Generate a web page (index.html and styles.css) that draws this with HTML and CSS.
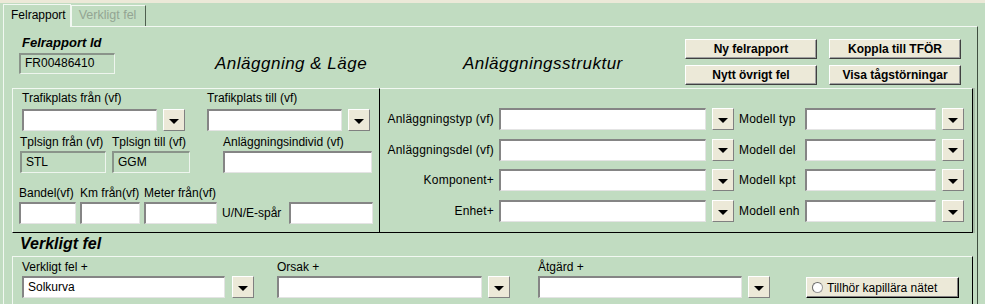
FILE: index.html
```html
<!DOCTYPE html>
<html lang="sv">
<head>
  <meta charset="UTF-8" />
  <title>Felrapport</title>
  <link rel="stylesheet" href="styles.css">
</head>
<body>
  <div class="tabs">
    <div class="tab active">Felrapport</div>
    <div class="tab">Verkligt fel</div>
  </div>

  <div class="page">
    <!-- header: id, titles, actions -->
    <div class="head">
      <div class="id-block">
        <div class="id-label">Felrapport Id</div>
        <div class="field disabled id-field">FR00486410</div>
      </div>
      <div class="title title-loc">Anläggning &amp; Läge</div>
      <div class="title title-struct">Anläggningsstruktur</div>
      <div class="actions">
        <button class="btn">Ny felrapport</button>
        <button class="btn">Koppla till TFÖR</button>
        <button class="btn">Nytt övrigt fel</button>
        <button class="btn">Visa tågstörningar</button>
      </div>
    </div>

    <div class="groups">
      <!-- Anläggning & Läge -->
      <div class="group group-loc">
        <div class="row loc-row1">
          <div class="col col-tp1">
            <div class="lbl">Trafikplats från (vf)</div>
            <div class="combo"><div class="field w135"></div><span class="drop"><svg viewBox="0 0 10 5" width="10" height="5"><polygon points="0,0 10,0 5,5"/></svg></span></div>
          </div>
          <div class="col col-tp2">
            <div class="lbl">Trafikplats till (vf)</div>
            <div class="combo"><div class="field w135"></div><span class="drop"><svg viewBox="0 0 10 5" width="10" height="5"><polygon points="0,0 10,0 5,5"/></svg></span></div>
          </div>
        </div>
        <div class="row loc-row2">
          <div class="col col-sign1">
            <div class="lbl">Tplsign från (vf)</div>
            <div class="field disabled w86">STL</div>
          </div>
          <div class="col col-sign2">
            <div class="lbl">Tplsign till (vf)</div>
            <div class="field disabled w78">GGM</div>
          </div>
          <div class="col col-ind">
            <div class="lbl">Anläggningsindivid (vf)</div>
            <div class="field w149"></div>
          </div>
        </div>
        <div class="row loc-row3">
          <div class="col col-bandel">
            <div class="lbl">Bandel(vf)</div>
            <div class="field w57"></div>
          </div>
          <div class="col col-km">
            <div class="lbl">Km från(vf)</div>
            <div class="field w60"></div>
          </div>
          <div class="col col-m">
            <div class="lbl">Meter från(vf)</div>
            <div class="field w73"></div>
          </div>
          <div class="inline-lbl spar-lbl">U/N/E-spår</div>
          <div class="field w84"></div>
        </div>
      </div>

      <!-- Anläggningsstruktur -->
      <div class="group group-struct">
        <div class="srow">
          <div class="slbl">Anläggningstyp (vf)</div>
          <div class="field w207"></div>
          <span class="drop"><svg viewBox="0 0 10 5" width="10" height="5"><polygon points="0,0 10,0 5,5"/></svg></span>
          <div class="mlbl">Modell typ</div>
          <div class="field w131"></div>
          <span class="drop"><svg viewBox="0 0 10 5" width="10" height="5"><polygon points="0,0 10,0 5,5"/></svg></span>
        </div>
        <div class="srow">
          <div class="slbl">Anläggningsdel (vf)</div>
          <div class="field w207"></div>
          <span class="drop"><svg viewBox="0 0 10 5" width="10" height="5"><polygon points="0,0 10,0 5,5"/></svg></span>
          <div class="mlbl">Modell del</div>
          <div class="field w131"></div>
          <span class="drop"><svg viewBox="0 0 10 5" width="10" height="5"><polygon points="0,0 10,0 5,5"/></svg></span>
        </div>
        <div class="srow">
          <div class="slbl">Komponent+</div>
          <div class="field w207"></div>
          <span class="drop"><svg viewBox="0 0 10 5" width="10" height="5"><polygon points="0,0 10,0 5,5"/></svg></span>
          <div class="mlbl">Modell kpt</div>
          <div class="field w131"></div>
          <span class="drop"><svg viewBox="0 0 10 5" width="10" height="5"><polygon points="0,0 10,0 5,5"/></svg></span>
        </div>
        <div class="srow">
          <div class="slbl">Enhet+</div>
          <div class="field w207"></div>
          <span class="drop"><svg viewBox="0 0 10 5" width="10" height="5"><polygon points="0,0 10,0 5,5"/></svg></span>
          <div class="mlbl">Modell enh</div>
          <div class="field w131"></div>
          <span class="drop"><svg viewBox="0 0 10 5" width="10" height="5"><polygon points="0,0 10,0 5,5"/></svg></span>
        </div>
      </div>
    </div>

    <div class="sub-title">Verkligt fel</div>

    <!-- Verkligt fel -->
    <div class="group group-fault">
      <div class="row fault-row">
        <div class="col col-vf">
          <div class="lbl">Verkligt fel +</div>
          <div class="combo"><div class="field w203">Solkurva</div><span class="drop"><svg viewBox="0 0 10 5" width="10" height="5"><polygon points="0,0 10,0 5,5"/></svg></span></div>
        </div>
        <div class="col col-orsak">
          <div class="lbl">Orsak +</div>
          <div class="combo"><div class="field w205"></div><span class="drop"><svg viewBox="0 0 10 5" width="10" height="5"><polygon points="0,0 10,0 5,5"/></svg></span></div>
        </div>
        <div class="col col-atgard">
          <div class="lbl">Åtgärd +</div>
          <div class="combo"><div class="field w204"></div><span class="drop"><svg viewBox="0 0 10 5" width="10" height="5"><polygon points="0,0 10,0 5,5"/></svg></span></div>
        </div>
        <div class="radio-btn"><span class="radio"></span>Tillhör kapillära nätet</div>
      </div>
    </div>
  </div>
</body>
</html>
```

FILE: styles.css
```css
* {
  box-sizing: border-box;
}

html, body {
  margin: 0;
}

body {
  width: 985px;
  height: 304px;
  overflow: hidden;
  background: #c1dcc1;
  border-top: 3px solid #ece9d8;
  font-family: 'Liberation Sans', Arial, sans-serif;
  font-size: 12px;
  color: #000;
}

/* tabs */
.tabs {
  display: flex;
  align-items: flex-end;
  height: 23px;
  padding-left: 3px;
}

.tab {
  height: 21px;
  line-height: 19px;
  padding: 0 9px 0 7px;
  border: 1px solid #f2f8f2;
  border-bottom: none;
  border-right-color: #4f5f4f;
  color: #93a593;
  font-size: 12.5px;
}

.tab.active {
  height: 23px;
  line-height: 20px;
  padding: 0 4px 0 7px;
  margin-bottom: -1px;
  border-right-color: #f2f8f2;
  background: #c1dcc1;
  color: #000;
  font-size: 12px;
  position: relative;
  z-index: 1;
}

/* page */
.page {
  margin-left: 3px;
  width: 975px;
  height: 280px;
  border-top: 1px solid #f2f8f2;
  border-left: 1px solid #f2f8f2;
  border-right: 1px solid #3f4f3f;
}

.head {
  display: flex;
  height: 61px;
}

.id-block {
  margin: 8px 0 0 15px;
  width: 96px;
}

.id-label {
  height: 18px;
  padding-left: 3px;
  font-size: 13px;
  line-height: 15px;
  font-weight: bold;
  font-style: italic;
}

.title {
  margin-top: 27px;
  font-size: 17px;
  line-height: 20px;
  font-style: italic;
  letter-spacing: 0.5px;
  white-space: nowrap;
}

.title-loc {
  margin-left: 100px;
  width: 248px;
}

.title-struct {
  width: 222px;
}

.actions {
  margin-top: 12px;
  display: grid;
  grid-template-columns: 132px 132px;
  gap: 3px 12px;
}

.btn {
  height: 20px;
  padding: 0;
  background: #ece9d8;
  border: 1px solid;
  border-color: #fff #404040 #404040 #fff;
  box-shadow: inset -1px -1px 0 #a0a0a0;
  font-family: 'Liberation Sans', Arial, sans-serif;
  font-size: 12px;
  font-weight: bold;
  color: #000;
}

/* fields */
.field {
  height: 22px;
  line-height: 18px;
  padding: 0 4px;
  background: #fff;
  border-style: solid;
  border-width: 2px 1px 1px 2px;
  border-color: #858585 #e4e4e4 #e4e4e4 #858585;
  white-space: nowrap;
  overflow: hidden;
}

.field.disabled {
  background: #c1dcc1;
  border-color: #8a948a #eef5ee #eef5ee #8a948a;
}

.id-field {
  width: 96px;
  height: 21px;
  line-height: 17px;
}

.w57 { width: 57px; }
.w60 { width: 60px; }
.w73 { width: 73px; }
.w78 { width: 78px; }
.w84 { width: 84px; }
.w86 { width: 86px; }
.w131 { width: 131px; }
.w135 { width: 135px; }
.w149 { width: 149px; }
.w203 { width: 203px; }
.w204 { width: 204px; }
.w205 { width: 205px; }
.w207 { width: 207px; }

.drop {
  width: 22px;
  height: 22px;
  display: flex;
  align-items: center;
  justify-content: center;
  padding-top: 2px;
  background: #ece9d8;
  border: 1px solid;
  border-color: #fff #808080 #808080 #fff;
  flex-shrink: 0;
}

.drop svg {
  display: block;
  fill: #000;
}

.combo {
  display: flex;
  gap: 6px;
}

.lbl {
  height: 18px;
  line-height: 14px;
  white-space: nowrap;
}

/* groups */
.groups {
  display: flex;
  margin-left: 8px;
  height: 145px;
}

.group {
  border: 1px solid;
  border-color: #f2f8f2 #000 #000 #f2f8f2;
}

.group-loc {
  width: 368px;
  padding-top: 2px;
}

.group-struct {
  width: 593px;
  border-left: none;
  padding-top: 19px;
  box-shadow: 2px 0 0 #a6bca6;
}

.row {
  display: flex;
}

.col-tp1 { margin-left: 9px; }
.col-tp2 { margin-left: 22px; }

.loc-row2 {
  margin-top: 4px;
}

.loc-row2 .lbl,
.loc-row3 .lbl {
  height: 16px;
}

.col-sign1 { margin-left: 7px; }
.col-sign2 { margin-left: 6px; }
.col-ind { margin-left: 33px; }

.loc-row3 {
  margin-top: 13px;
  align-items: flex-end;
}

.col-bandel { margin-left: 6px; }
.col-km { margin-left: 4px; }
.col-m { margin-left: 4px; }

.inline-lbl {
  height: 22px;
  line-height: 22px;
  white-space: nowrap;
}

.spar-lbl {
  margin-left: 5px;
  width: 67px;
}

.srow {
  display: flex;
  align-items: center;
  height: 22px;
  margin-bottom: 8.7px;
}

.slbl {
  width: 119px;
  padding-right: 5px;
  text-align: right;
  white-space: nowrap;
  letter-spacing: 0.2px;
}

.srow .drop {
  margin-left: 6px;
}

.mlbl {
  width: 66px;
  margin-left: 5px;
  white-space: nowrap;
  letter-spacing: 0.2px;
}

/* Verkligt fel */
.sub-title {
  height: 23px;
  padding-left: 16px;
  font-size: 16px;
  line-height: 21px;
  font-weight: bold;
  font-style: italic;
}

.group-fault {
  margin-left: 8px;
  width: 961px;
  height: 60px;
  padding-top: 3px;
  border-bottom: none;
}

.group-fault .lbl {
  height: 16px;
}

.col-vf { margin-left: 9px; }
.col-orsak { margin-left: 23px; }
.col-atgard { margin-left: 28px; }

.col-vf .combo { gap: 7px; }

.radio-btn {
  margin: 17px 0 0 36px;
  width: 153px;
  height: 21px;
  display: flex;
  align-items: center;
  gap: 4px;
  padding-left: 5px;
  background: #ece9d8;
  border: 1px solid;
  border-color: #fff #000 #000 #fff;
  box-shadow: inset -1px -1px 0 #808080;
  white-space: nowrap;
}

.radio {
  width: 11px;
  height: 11px;
  border-radius: 50%;
  background: #fff;
  border: 1px solid #9a9a9a;
  border-top-color: #6a6a6a;
  border-left-color: #6a6a6a;
}
```
